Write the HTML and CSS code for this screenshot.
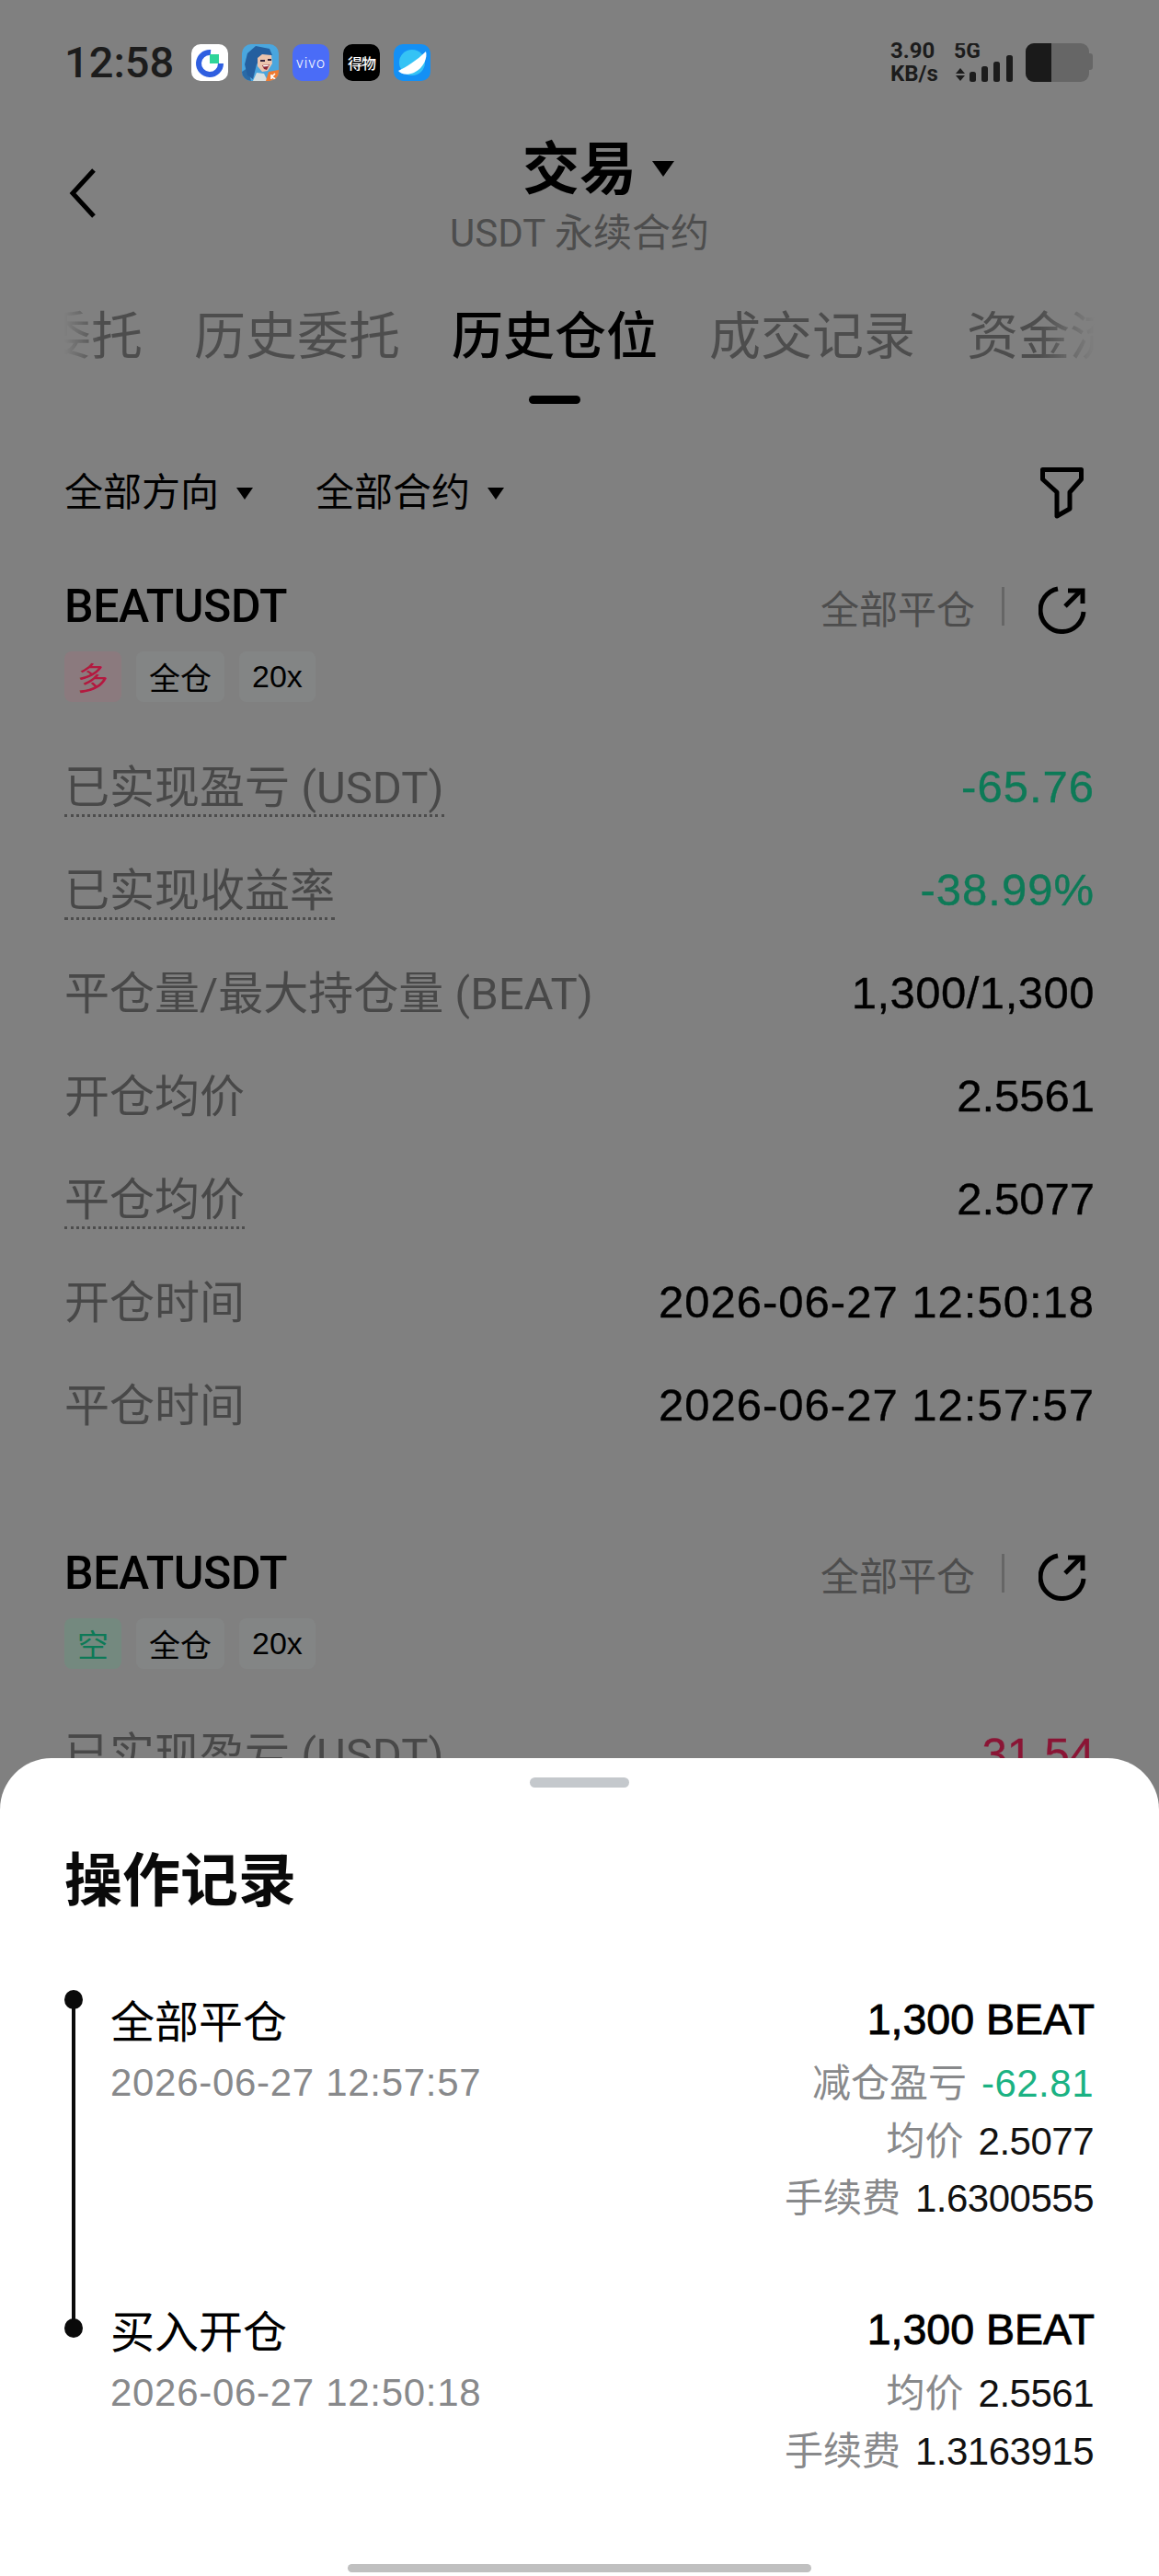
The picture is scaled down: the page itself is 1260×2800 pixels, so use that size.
FILE: index.html
```html
<!DOCTYPE html>
<html>
<head>
  <title>操作记录</title>
  <link rel="stylesheet" href="styles.css">
</head>
<body>
  <div class="page">
    <div class="status-bar">
      <div class="status-left">
        <span class="clock">12:58</span>
        <div class="app-icon icon-white">
          <svg width="40" height="40" viewBox="0 0 40 40">
            <path d="M21 9 A12 12 0 1 0 32 21" fill="none" stroke="#2f5fe0" stroke-width="6"/>
            <rect x="20" y="11" width="10" height="10" fill="#2fd59a"/>
          </svg>
        </div>
        <div class="app-icon">
          <svg width="40" height="40" viewBox="0 0 40 40">
            <rect width="40" height="40" fill="#4aa6de"/>
            <path d="M0 40 V30 L6 26 L10 40 Z" fill="#2a6aa6"/>
            <path d="M15 2 L6 10 L3 22 L6 34 L12 38 L16 22 L22 12 L33 12 L30 5 Z" fill="#245f9f"/>
            <path d="M17 15 L22 11 L32 12 L33 21 L28 29 L22 30 L17 24 Z" fill="#ecc4ad"/>
            <path d="M20 18 L25 18 M28 17 L32 17" stroke="#33223a" stroke-width="2"/>
            <path d="M22 23 L30 22 L27 28 L24 27 Z" fill="#8a2434"/>
            <path d="M23 23 L29 22.5 L28.5 24 L23.5 24.5 Z" fill="#fff"/>
            <path d="M12 40 L16 31 L24 32 L28 40 Z" fill="#d6dfe0"/>
            <path d="M26 40 L29 30 L40 28 V40 Z" fill="#ef7b32"/>
            <path d="M32 33 V38 M36 32 L32.5 35.5 L36.5 38" fill="none" stroke="#fff" stroke-width="1.6"/>
          </svg>
        </div>
        <div class="app-icon icon-vivo">vivo</div>
        <div class="app-icon icon-dewu">得物</div>
        <div class="app-icon icon-planet">
          <svg width="40" height="40" viewBox="0 0 40 40">
            <circle cx="20" cy="20" r="14" fill="#35c3f5"/>
            <path d="M5 29 C12 26 26 17 35 8 C37 14 33 26 22 31 C15 34 8 33 5 29 Z" fill="#fff"/>
          </svg>
        </div>
      </div>
      <div class="status-right">
        <div class="speed"><span>3.90</span><span>KB/s</span></div>
        <svg class="signal" width="66" height="42" viewBox="0 0 66 42">
          <text x="0" y="16" class="signal-text">5G</text>
          <path d="M2 33 L7 27 L12 33 Z M2 35 L7 41 L12 35 Z" fill="#1c1c1c"/>
          <rect x="17" y="31" width="7" height="11" rx="2.5" fill="#1c1c1c"/>
          <rect x="30" y="25" width="7" height="17" rx="2.5" fill="#1c1c1c"/>
          <rect x="43" y="20" width="7" height="22" rx="2.5" fill="#1c1c1c"/>
          <rect x="57" y="13" width="7" height="29" rx="2.5" fill="#1c1c1c"/>
        </svg>
        <svg class="battery" width="73" height="42" viewBox="0 0 73 42">
          <rect x="0" y="0" width="69" height="42" rx="9" fill="#666"/>
          <path d="M68 11 H70 A3 3 0 0 1 73 14 V26 A3 3 0 0 1 70 29 H68 Z" fill="#666"/>
          <path d="M9 0 H28 V42 H9 A9 9 0 0 1 0 33 V9 A9 9 0 0 1 9 0 Z" fill="#1a1a1a"/>
        </svg>
      </div>
    </div>

    <div class="nav">
      <svg class="back" width="30" height="54" viewBox="0 0 30 54">
        <path d="M27 2 L4 27 L27 52" fill="none" stroke="#000" stroke-width="5"/>
      </svg>
      <div class="nav-title">
        <div class="title-line">交易<span class="caret caret-big"></span></div>
        <div class="subtitle">USDT 永续合约</div>
      </div>
    </div>

    <div class="tabs">
      <div class="tab tab-first">当前委托</div>
      <div class="tab">历史委托</div>
      <div class="tab active">历史仓位</div>
      <div class="tab">成交记录</div>
      <div class="tab">资金流水</div>
    </div>

    <div class="filters">
      <span class="filter">全部方向<span class="caret"></span></span>
      <span class="filter">全部合约<span class="caret"></span></span>
      <svg class="funnel" width="47" height="56" viewBox="0 0 47 56">
        <path d="M2.5 2.5 H44.5 V13 L32 27 V45 L18 53 V27 L2.5 13 Z" fill="none" stroke="#000" stroke-width="5" stroke-linejoin="round"/>
      </svg>
    </div>

    <div class="card">
      <div class="card-head">
        <span class="symbol">BEATUSDT</span>
        <div class="card-actions">
          <span class="close-all">全部平仓</span>
          <span class="divider"></span>
          <svg class="share" width="52" height="52" viewBox="0 0 52 52">
            <path d="M21 3 A23.5 23.5 0 1 0 49 28" fill="none" stroke="#000" stroke-width="5"/>
            <path d="M29 22 L46 5" fill="none" stroke="#000" stroke-width="5"/>
            <path d="M32 5 H48 V19" fill="none" stroke="#000" stroke-width="5"/>
          </svg>
        </div>
      </div>
      <div class="tags">
        <span class="tag tag-long">多</span>
        <span class="tag">全仓</span>
        <span class="tag">20x</span>
      </div>
      <div class="rows">
        <div class="row"><span class="label dotted">已实现盈亏 (USDT)</span><span class="value wide green">-65.76</span></div>
        <div class="row"><span class="label dotted">已实现收益率</span><span class="value wide green">-38.99%</span></div>
        <div class="row"><span class="label">平仓量/最大持仓量 (BEAT)</span><span class="value amount">1,300/1,300</span></div>
        <div class="row"><span class="label">开仓均价</span><span class="value">2.5561</span></div>
        <div class="row"><span class="label dotted">平仓均价</span><span class="value">2.5077</span></div>
        <div class="row"><span class="label">开仓时间</span><span class="value wide">2026-06-27 12:50:18</span></div>
        <div class="row"><span class="label">平仓时间</span><span class="value wide">2026-06-27 12:57:57</span></div>
      </div>
    </div>

    <div class="card card-next">
      <div class="card-head">
        <span class="symbol">BEATUSDT</span>
        <div class="card-actions">
          <span class="close-all">全部平仓</span>
          <span class="divider"></span>
          <svg class="share" width="52" height="52" viewBox="0 0 52 52">
            <path d="M21 3 A23.5 23.5 0 1 0 49 28" fill="none" stroke="#000" stroke-width="5"/>
            <path d="M29 22 L46 5" fill="none" stroke="#000" stroke-width="5"/>
            <path d="M32 5 H48 V19" fill="none" stroke="#000" stroke-width="5"/>
          </svg>
        </div>
      </div>
      <div class="tags">
        <span class="tag tag-short">空</span>
        <span class="tag">全仓</span>
        <span class="tag">20x</span>
      </div>
      <div class="rows">
        <div class="row"><span class="label dotted">已实现盈亏 (USDT)</span><span class="value red">31.54</span></div>
      </div>
    </div>

    <div class="sheet">
      <div class="handle"></div>
      <h2 class="sheet-title">操作记录</h2>
      <div class="log">
        <div class="log-item log-top">
          <div>
            <div class="log-name">全部平仓</div>
            <div class="log-date">2026-06-27 12:57:57</div>
          </div>
          <div class="log-info">
            <div class="log-amount">1,300 BEAT</div>
            <div class="log-line log-line-first"><span class="muted">减仓盈亏</span><span class="num profit">-62.81</span></div>
            <div class="log-line"><span class="muted">均价</span><span class="num">2.5077</span></div>
            <div class="log-line"><span class="muted">手续费</span><span class="num">1.6300555</span></div>
          </div>
        </div>
        <div class="log-item log-bottom">
          <div>
            <div class="log-name">买入开仓</div>
            <div class="log-date">2026-06-27 12:50:18</div>
          </div>
          <div class="log-info">
            <div class="log-amount">1,300 BEAT</div>
            <div class="log-line log-line-first"><span class="muted">均价</span><span class="num">2.5561</span></div>
            <div class="log-line"><span class="muted">手续费</span><span class="num">1.3163915</span></div>
          </div>
        </div>
      </div>
      <div class="home-bar"></div>
    </div>
  </div>
</body>
</html>
```

FILE: styles.css
```css
* {
  box-sizing: border-box;
}

body {
  margin: 0;
  font-family: Roboto, "Noto Sans CJK SC", sans-serif;
  color: #000;
}

.page {
  position: relative;
  width: 1260px;
  height: 2800px;
  padding: 47px 70px 0;
  overflow: hidden;
  background-color: #808080;
}

/* Status bar */
.status-bar {
  display: flex;
  justify-content: space-between;
  align-items: center;
  height: 42px;
}

.status-left {
  display: flex;
  align-items: center;
  gap: 15px;
}

.clock {
  width: 123px;
  font-size: 47px;
  font-weight: 500;
  line-height: 42px;
  color: #1c1c1c;
}

.app-icon {
  display: flex;
  justify-content: center;
  align-items: center;
  width: 40px;
  height: 40px;
  border-radius: 10px;
  overflow: hidden;
}

.icon-white {
  background-color: #fff;
}

.icon-vivo {
  background-color: #4a6cf7;
  color: #fff;
  font-size: 16px;
  font-weight: 300;
  letter-spacing: 1px;
}

.icon-dewu {
  background-color: #000;
  color: #fff;
  font-size: 16px;
  font-weight: 500;
  letter-spacing: -1px;
}

.icon-planet {
  background-color: #1490f5;
}

.status-right {
  display: flex;
  align-items: center;
  margin-right: 2px;
}

.speed {
  display: flex;
  flex-direction: column;
  width: 69px;
  font-size: 24px;
  font-weight: 700;
  line-height: 25px;
  color: #1c1c1c;
}

.signal {
  margin-right: 12px;
}

.signal-text {
  font-family: Roboto, sans-serif;
  font-size: 23px;
  font-weight: 700;
  fill: #1c1c1c;
}

/* Title */
.nav {
  position: relative;
  margin-top: 61px;
  text-align: center;
}

.back {
  position: absolute;
  left: 5px;
  top: 33px;
}

.title-line {
  font-size: 62px;
  font-weight: 700;
  line-height: 70px;
}

.subtitle {
  margin-top: 12px;
  font-size: 42px;
  line-height: 44px;
  color: #4d4d4d;
}

.caret {
  display: inline-block;
  width: 0;
  height: 0;
  margin-left: 19px;
  vertical-align: middle;
  border-left: 9px solid transparent;
  border-right: 9px solid transparent;
  border-top: 13px solid #000;
}

.caret-big {
  position: relative;
  top: -6px;
  margin-left: 17px;
  margin-right: -41px;
  border-left-width: 12px;
  border-right-width: 12px;
  border-top-width: 17px;
}

/* Tabs */
.tabs {
  display: flex;
  gap: 56px;
  height: 110px;
  margin-top: 54px;
  overflow: hidden;
  -webkit-mask-image: linear-gradient(to right, transparent 0, #000 40px, #000 1060px, transparent 1120px);
  mask-image: linear-gradient(to right, transparent 0, #000 40px, #000 1060px, transparent 1120px);
}

.tab {
  display: flex;
  flex-direction: column;
  align-items: center;
  flex-shrink: 0;
  font-size: 56px;
  line-height: 72px;
  color: #4d4d4d;
}

.tab-first {
  margin-left: -139px;
}

.tab.active {
  font-weight: 500;
  color: #000;
}

.tab.active::after {
  content: "";
  width: 56px;
  height: 9px;
  margin-top: 28px;
  border-radius: 5px;
  background-color: #000;
}

/* Filters */
.filters {
  display: flex;
  align-items: center;
  height: 56px;
  margin-top: 68px;
}

.filter {
  display: flex;
  align-items: center;
  margin-right: 68px;
  font-size: 42px;
  line-height: 56px;
}

.funnel {
  margin-left: auto;
  margin-right: 12px;
}

/* Position cards */
.card {
  margin-top: 65px;
}

.card-next {
  margin-top: 95px;
}

.card-head {
  display: flex;
  justify-content: space-between;
  align-items: center;
  height: 60px;
}

.symbol {
  font-size: 50px;
  font-weight: 500;
  letter-spacing: -0.4px;
}

.card-actions {
  display: flex;
  align-items: center;
  margin-right: 9px;
}

.close-all {
  font-size: 42px;
  color: #4d4d4d;
}

.divider {
  width: 3px;
  height: 42px;
  margin: 0 37px 0 29px;
  background-color: #666;
}

.share {
  margin-top: 8px;
}

.tags {
  display: flex;
  gap: 16px;
  margin-top: 19px;
}

.tag {
  display: flex;
  align-items: center;
  height: 55px;
  padding: 0 14px;
  border-radius: 8px;
  background-color: #838585;
  font-family: "Liberation Sans", "Noto Sans CJK SC", sans-serif;
  font-size: 34px;
}

.tag-long {
  background-color: #8b7a7e;
  color: #b3193f;
}

.tag-short {
  background-color: #74897f;
  color: #0d7a57;
}

.rows {
  margin-top: 38px;
}

.row {
  display: flex;
  justify-content: space-between;
  align-items: center;
  height: 112px;
}

.label {
  font-size: 49px;
  line-height: 56px;
  color: #484848;
}

.dotted {
  padding-top: 3px;
  border-bottom: 3px dotted #4d4d4d;
}

.value {
  padding-bottom: 4px;
  font-family: "Liberation Sans", sans-serif;
  font-size: 49px;
  -webkit-text-stroke: 0.4px currentColor;
}

.value.wide {
  letter-spacing: 1px;
}

.value.amount {
  letter-spacing: 0.5px;
}

.green {
  color: #0d7a57;
}

.red {
  color: #8a1535;
}

/* Bottom sheet */
.sheet {
  position: absolute;
  left: 0;
  right: 0;
  top: 1911px;
  bottom: 0;
  display: flex;
  flex-direction: column;
  padding: 21px 70px 4px;
  border-radius: 56px 56px 0 0;
  background-color: #fff;
}

.handle {
  align-self: center;
  width: 108px;
  height: 11px;
  border-radius: 6px;
  background-color: #c4c8cc;
}

.sheet-title {
  margin: 62px 0 0;
  font-size: 63px;
  font-weight: 700;
  line-height: 80px;
  color: #0a0a0a;
}

.log {
  margin-top: 79px;
}

.log-item {
  position: relative;
  display: flex;
  justify-content: space-between;
  padding-left: 50px;
}

.log-item::before {
  content: "";
  position: absolute;
  left: 0;
  width: 20px;
  height: 21px;
  border-radius: 50%;
  background-color: #0a0a0a;
}

.log-top {
  margin-bottom: 79.5px;
}

.log-top::before {
  top: -1px;
}

.log-top::after {
  content: "";
  position: absolute;
  left: 8px;
  top: 9px;
  width: 4px;
  height: 357px;
  background-color: #0a0a0a;
}

.log-bottom::before {
  top: 19px;
}

.log-name {
  padding-top: 4px;
  font-size: 48px;
  line-height: 62px;
}

.log-date {
  margin-top: 3px;
  font-family: "Liberation Sans", sans-serif;
  font-size: 42px;
  letter-spacing: 0.7px;
  line-height: 62px;
  color: #88898b;
}

.log-info {
  text-align: right;
}

.log-amount {
  font-family: "Liberation Sans", sans-serif;
  font-size: 46.5px;
  line-height: 62px;
  -webkit-text-stroke: 0.9px #000;
}

.log-line {
  display: flex;
  justify-content: flex-end;
  align-items: baseline;
  gap: 16px;
  padding-right: 1px;
  font-size: 42px;
  line-height: 62.5px;
  color: #111;
}

.log-line-first {
  margin-top: 8px;
}

.num {
  font-family: "Liberation Sans", sans-serif;
  letter-spacing: -0.5px;
}

.muted {
  color: #88898b;
}

.profit {
  letter-spacing: 0.5px;
  color: #1bb283;
}

.home-bar {
  align-self: center;
  width: 504px;
  height: 9px;
  margin-top: auto;
  border-radius: 5px;
  background-color: #c0c0c0;
}
```
